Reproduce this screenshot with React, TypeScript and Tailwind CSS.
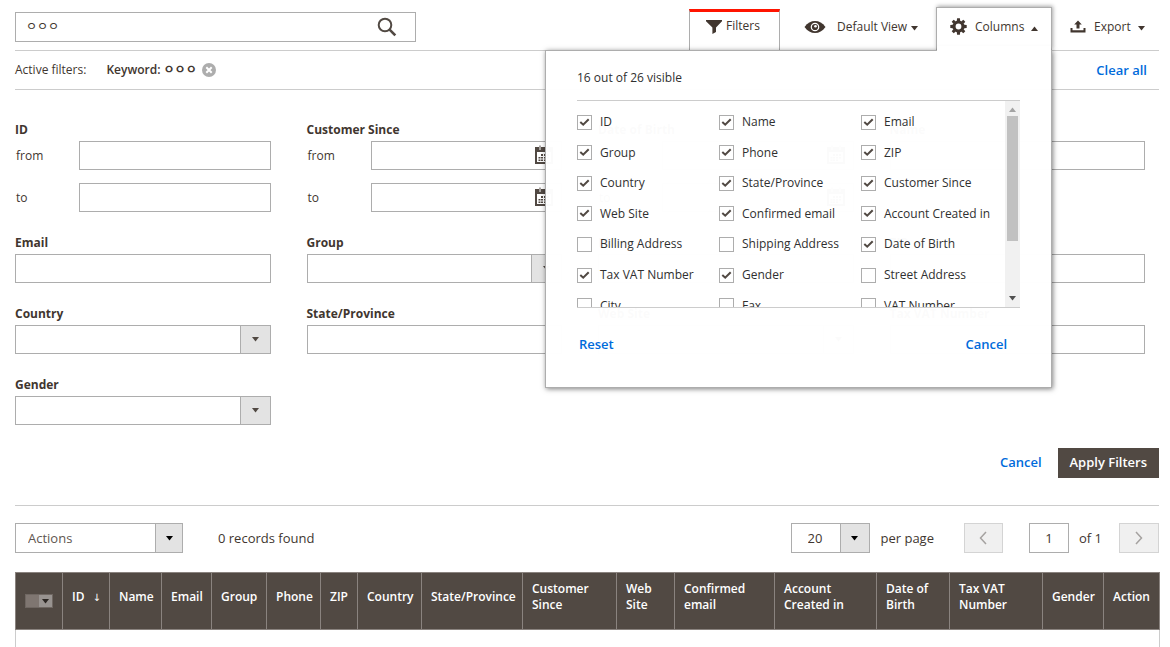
import { useState } from "react";
import type { ReactNode } from "react";

const COLUMNS: [string, boolean][] = [
    ["ID", true],
    ["Name", true],
    ["Email", true],
    ["Group", true],
    ["Phone", true],
    ["ZIP", true],
    ["Country", true],
    ["State/Province", true],
    ["Customer Since", true],
    ["Web Site", true],
    ["Confirmed email", true],
    ["Account Created in", true],
    ["Billing Address", false],
    ["Shipping Address", false],
    ["Date of Birth", true],
    ["Tax VAT Number", true],
    ["Gender", true],
    ["Street Address", false],
    ["City", false],
    ["Fax", false],
    ["VAT Number", false],
    ["Company", false],
    ["Billing Firstname", false],
    ["Billing Lastname", false],
    ["Account Lock", false],
    ["Action", true],
];

const TABLE_HEAD = [
    { label: "ID", width: "w-[47px]", sorted: true },
    { label: "Name", width: "w-[52px]" },
    { label: "Email", width: "w-[50px]" },
    { label: "Group", width: "w-[55px]" },
    { label: "Phone", width: "w-[54px]" },
    { label: "ZIP", width: "w-[37px]" },
    { label: "Country", width: "w-[64px]" },
    { label: "State/Province", width: "w-[101px]" },
    { label: "Customer Since", width: "w-[94px]" },
    { label: "Web Site", width: "w-[58px]" },
    { label: "Confirmed email", width: "w-[100px]" },
    { label: "Account Created in", width: "w-[102px]" },
    { label: "Date of Birth", width: "w-[73px]" },
    { label: "Tax VAT Number", width: "w-[93px]" },
    { label: "Gender", width: "w-[61px]" },
    { label: "Action", width: "w-[56px]" },
];

const inputClass = "h-[29px] w-full min-w-0 border border-[#adadad] bg-white px-2 outline-none";

function Caret({ up = false, className = "text-black" }: { up?: boolean; className?: string }) {
    return (
        <svg width="7" height="5" viewBox="0 0 7 5" className={className} aria-hidden="true">
            <path d={up ? "M0 5 3.5 0.500 7 5z" : "M0 0h7L3.500 4.500z"} fill="currentColor" />
        </svg>
    );
}

function SearchIcon() {
    return (
        <svg width="20" height="20" viewBox="0 0 20 20" fill="none" stroke="#514943" aria-hidden="true">
            <circle cx="8" cy="8" r="6.3" strokeWidth="2" />
            <path d="M12.6 12.6 18.3 18.3" strokeWidth="2.6" />
        </svg>
    );
}

function FunnelIcon() {
    return (
        <svg width="16" height="14" viewBox="0 0 16 14" fill="#41362f" aria-hidden="true">
            <path d="M0 0h16v1.200L10 7.400V12l-3.600 2V7.400L0 1.200z" />
        </svg>
    );
}

function EyeIcon() {
    return (
        <svg width="22" height="14" viewBox="0 0 22 14" aria-hidden="true">
            <path d="M0.500 7C3.500 2.800 7 1 11 1s7.500 1.800 10.500 6C18.500 11.200 15 13 11 13S3.500 11.200 0.500 7z" fill="#41362f" />
            <circle cx="11" cy="7" r="4.300" fill="#fff" />
            <circle cx="11" cy="7" r="3.100" fill="#41362f" />
            <circle cx="11.500" cy="6.300" r="1.300" fill="#fff" />
        </svg>
    );
}

function GearIcon() {
    return (
        <svg width="17" height="17" viewBox="-8.5 -8.5 17 17" aria-hidden="true">
            <circle r="4.500" fill="none" stroke="#41362f" strokeWidth="3.200" />
            {[0, 45, 90, 135, 180, 225, 270, 315].map((angle) => (
                <path key={angle} d="M-1.700-5.500-1.400-8.200h2.800L1.700-5.500z" fill="#41362f" transform={`rotate(${angle})`} />
            ))}
        </svg>
    );
}

function ExportIcon() {
    return (
        <svg width="16" height="13" viewBox="0 0 16 13" fill="#41362f" aria-hidden="true">
            <path d="M0.500 8h2v2.300h11V8h2v4.500H0.500z" />
            <path d="M8 0.500 11.800 4.400H9.500V8.500H6.500V4.400H4.200z" />
        </svg>
    );
}

function CalendarIcon() {
    return (
        <svg width="18" height="19" viewBox="0 0 18 19" aria-hidden="true">
            <path d="M0 2h18v17H0z" fill="#514943" />
            <path d="M2 7h14v10H2z" fill="#fff" />
            <path d="M4 0h2v4.500H4zM12 0h2v4.500h-2z" fill="#fff" />
            <path d="M4.500 0.500h1v3.500h-1zM12.500 0.500h1v3.500h-1z" fill="#514943" />
            <path d="M6 9h2v2H6zM9 9h2v2H9zM12 9h2v2h-2zM3.500 12h2v1.500h-2zM6 12h2v1.500H6zM9 12h2v1.500H9zM12 12h2v1.500h-2zM3.500 14.500h2V16h-2zM6 14.500h2V16H6zM9 14.500h2V16H9z" fill="#514943" />
        </svg>
    );
}

function Select({ label, value = "", className = "h-[29px]", textClass = "px-2", arrowClass = "w-[31px] text-[#514943]" }: { label: string; value?: string; className?: string; textClass?: string; arrowClass?: string }) {
    return (
        <div className={`relative ${className}`}>
            <select aria-label={label} className={`h-full w-full appearance-none border border-[#adadad] bg-white outline-none ${textClass}`}>
                <option>{value}</option>
            </select>
            <span className={`pointer-events-none absolute inset-y-0 right-0 flex items-center justify-center border border-[#adadad] bg-[#e3e3e3] ${arrowClass}`}>
                <Caret className="" />
            </span>
        </div>
    );
}

function Field({ label, children }: { label: string; children: ReactNode }) {
    return (
        <div>
            <div className="mb-[3px] text-xs leading-4 font-bold">{label}</div>
            {children}
        </div>
    );
}

function RangeField({ label, calendar = false }: { label: string; calendar?: boolean }) {
    return (
        <Field label={label}>
            <div className="flex flex-col gap-[13px]">
                {["from", "to"].map((edge) => (
                    <label key={edge} className="flex items-center">
                        <span className="w-16 shrink-0 pl-px">{edge}</span>
                        <span className="relative flex-1">
                            <input type="text" className={`block ${inputClass}`} />
                            {calendar && (
                                <button type="button" aria-label="Pick a date" className="absolute top-1 right-[9px]">
                                    <CalendarIcon />
                                </button>
                            )}
                        </span>
                    </label>
                ))}
            </div>
        </Field>
    );
}

function TextField({ label }: { label: string }) {
    return (
        <Field label={label}>
            <input type="text" aria-label={label} className={`block ${inputClass}`} />
        </Field>
    );
}

function SelectField({ label }: { label: string }) {
    return (
        <Field label={label}>
            <Select label={label} />
        </Field>
    );
}

function ColumnsMenu() {
    return (
        <div className="absolute top-[43px] right-0 z-10 h-[338px] w-[507px] border border-[#adadad] bg-white/98 px-[31px] text-[#303030] shadow-[1px_1px_5px_rgba(0,0,0,0.5)]">
            <div className="flex h-[49px] items-center pt-1">16 out of 26 visible</div>
            <div className="flex h-[208px] border-y border-[#ccc]">
                <div className="flex-1 overflow-y-auto pt-[6px] pr-[2px] [scrollbar-width:none]">
                    <div className="grid h-[275px] grid-cols-3 grid-rows-9">
                        {COLUMNS.map(([name, checked]) => (
                            <label key={name} className="flex items-center gap-2 whitespace-nowrap">
                                <span className="grid">
                                    <input type="checkbox" defaultChecked={checked} className="peer size-[15px] appearance-none border border-[#adadad] [grid-area:1/1]" />
                                    <svg width="15" height="15" viewBox="0 0 15 15" fill="none" stroke="#514943" strokeWidth="2" className="pointer-events-none invisible [grid-area:1/1] peer-checked:visible" aria-hidden="true">
                                        <path d="M3.300 7 6.200 9.700 11.700 4.200" />
                                    </svg>
                                </span>
                                {name}
                            </label>
                        ))}
                    </div>
                </div>
                <div aria-hidden="true" className="flex w-[15px] flex-col items-center bg-[#f1f1f1] pt-[6px] pb-[6px]">
                    <Caret up className="shrink-0 text-[#a3a3a3]" />
                    <div className="mt-1 mb-auto h-[125px] w-[11px] bg-[#c1c1c1]" />
                    <Caret className="shrink-0 text-[#505050]" />
                </div>
            </div>
            <div className="flex justify-between pt-7 pr-[13px] pl-[2px] text-[13px] font-semibold text-[#006bdb]">
                <button type="button">Reset</button>
                <button type="button">Cancel</button>
            </div>
        </div>
    );
}

export default function App() {
    const [showColumns, setShowColumns] = useState(true);
    const [keyword, setKeyword] = useState("ㅇㅇㅇ");

    return (
        <div className="bg-white pr-[11px] pl-[15px] font-['Open_Sans','Noto_Sans_CJK_KR',sans-serif] text-xs leading-4 text-[#41362f]">
            <header className="flex h-[51px] items-end justify-between border-b border-[#ccc]">
                <div className="mb-2 flex h-[30px] w-[401px] items-center border border-[#adadad] pr-[18px] pl-[10px]">
                    <input type="text" aria-label="Search by keyword" value={keyword} onChange={(e) => setKeyword(e.target.value)} className="min-w-0 flex-1 outline-none" />
                    <button type="button" aria-label="Search">
                        <SearchIcon />
                    </button>
                </div>
                <div className="flex items-end">
                    <button type="button" className="flex h-[41px] w-[91px] justify-center gap-1 border-x border-t-3 border-x-[#adadad] border-t-[#ff1400] pt-[6px] pr-[3px]">
                        <span className="mt-[2px]"><FunnelIcon /></span>
                        Filters
                    </button>
                    <button type="button" className="flex h-[47px] w-[156px] items-center pl-6">
                        <EyeIcon />
                        <span className="mr-1 ml-[11px]">Default View</span>
                        <Caret className="mt-[3px]" />
                    </button>
                    <div className="relative">
                        <button type="button" onClick={() => setShowColumns(!showColumns)} className="flex h-[43px] w-[116px] items-center border border-b-0 border-[#adadad] bg-white pb-[5px] pl-[13px] shadow-[1px_-1px_4px_rgba(0,0,0,0.35)]">
                            <GearIcon />
                            <span className="mr-[7px] ml-2">Columns</span>
                            <Caret up className="mt-[3px]" />
                        </button>
                        {showColumns && <ColumnsMenu />}
                        {showColumns && <span className="absolute inset-x-px -bottom-1 z-20 h-2 bg-white" />}
                    </div>
                    <button type="button" className="flex h-[47px] w-[107px] items-center pl-[18px]">
                        <ExportIcon />
                        <span className="mr-[7px] ml-2">Export</span>
                        <Caret className="mt-[3px]" />
                    </button>
                </div>
            </header>

            <section className="flex h-[39px] items-center border-b border-[#ccc] pb-px">
                <span>Active filters:</span>
                <span className="ml-5 font-semibold">Keyword: {keyword}</span>
                <button type="button" aria-label="Remove filter" className="mt-px ml-[5px]">
                    <svg width="14" height="14" viewBox="0 0 14 14" aria-hidden="true">
                        <circle cx="7" cy="7" r="7" fill="#adadad" />
                        <path d="M4.300 4.300 9.700 9.700M9.700 4.300 4.300 9.700" stroke="#fff" strokeWidth="2" />
                    </svg>
                </button>
                <button type="button" className="mr-3 ml-auto text-[13px] font-semibold text-[#006bdb]">Clear all</button>
            </section>

            <form onSubmit={(e) => e.preventDefault()} className="border-b border-[#ccc] pt-8 pb-[27px]">
                <div className="grid grid-cols-4 gap-x-9 gap-y-[23px] pr-[14px]">
                    <RangeField label="ID" />
                    <RangeField label="Customer Since" calendar />
                    <RangeField label="Date of Birth" calendar />
                    <TextField label="Name" />
                    <TextField label="Email" />
                    <SelectField label="Group" />
                    <TextField label="Phone" />
                    <TextField label="ZIP" />
                    <SelectField label="Country" />
                    <TextField label="State/Province" />
                    <SelectField label="Web Site" />
                    <TextField label="Tax VAT Number" />
                    <SelectField label="Gender" />
                </div>
                <div className="mt-[23px] flex items-center justify-end gap-4 text-[13px] font-semibold">
                    <button type="button" className="pb-[2px] text-[#006bdb]">Cancel</button>
                    <button type="submit" className="h-[30px] bg-[#514943] px-3 pb-[2px] text-white">Apply Filters</button>
                </div>
            </form>

            <section className="flex items-center pt-[17px] pb-[19px] text-[13px]">
                <Select label="Actions" value="Actions" className="h-[30px] w-[168px]" textClass="px-3 text-[#5f5650]" arrowClass="w-7 text-black" />
                <span className="ml-[35px]">0 records found</span>
                <div className="ml-auto flex items-center">
                    <Select label="Rows per page" value="20" className="h-[30px] w-[79px]" textClass="px-4" arrowClass="w-[30px] text-black" />
                    <span className="ml-[11px]">per page</span>
                    <button type="button" disabled aria-label="Previous page" className="ml-[30px] flex h-[30px] w-[39px] items-center justify-center border border-[#d4d4d4] bg-[#f0f0f0]">
                        <svg width="8" height="14" viewBox="0 0 8 14" fill="none" stroke="#a5a2a0" strokeWidth="1.500" aria-hidden="true">
                            <path d="M7 1 1.500 7 7 13" />
                        </svg>
                    </button>
                    <input type="text" aria-label="Page" defaultValue="1" className="ml-[26px] h-[30px] w-10 border border-[#adadad] text-center outline-none" />
                    <span className="ml-[10px]">of 1</span>
                    <button type="button" disabled aria-label="Next page" className="ml-[17px] flex h-[30px] w-10 items-center justify-center border border-[#d4d4d4] bg-[#f0f0f0]">
                        <svg width="8" height="14" viewBox="0 0 8 14" fill="none" stroke="#a5a2a0" strokeWidth="1.500" aria-hidden="true">
                            <path d="M1 1 6.500 7 1 13" />
                        </svg>
                    </button>
                </div>
            </section>

            <table className="w-full table-fixed border-collapse">
                <thead>
                    <tr className="h-[56px] bg-[#514943] text-left text-white">
                        <th className="w-[47px] border border-[#8a837f] pl-[9px]">
                            <button type="button" aria-label="Select rows" className="flex h-[14px] w-7 border border-[#6f6762] bg-[#7f7671]">
                                <span className="ml-auto flex h-full w-[13px] items-center justify-center bg-[#989390]">
                                    <Caret className="text-[#2b2622]" />
                                </span>
                            </button>
                        </th>
                        {TABLE_HEAD.map((column) => (
                            <th key={column.label} className={`border border-[#8a837f] pt-2 pr-1 pb-4 pl-[9px] font-semibold ${column.width}`}>
                                {column.label}
                                {column.sorted && <span className="ml-2 font-['DejaVu_Sans'] text-[10px] font-normal">↓</span>}
                            </th>
                        ))}
                    </tr>
                </thead>
                <tbody>
                    <tr>
                        <td colSpan={17} className="h-[18px] border-x border-[#ccc]" />
                    </tr>
                </tbody>
            </table>
        </div>
    );
}
